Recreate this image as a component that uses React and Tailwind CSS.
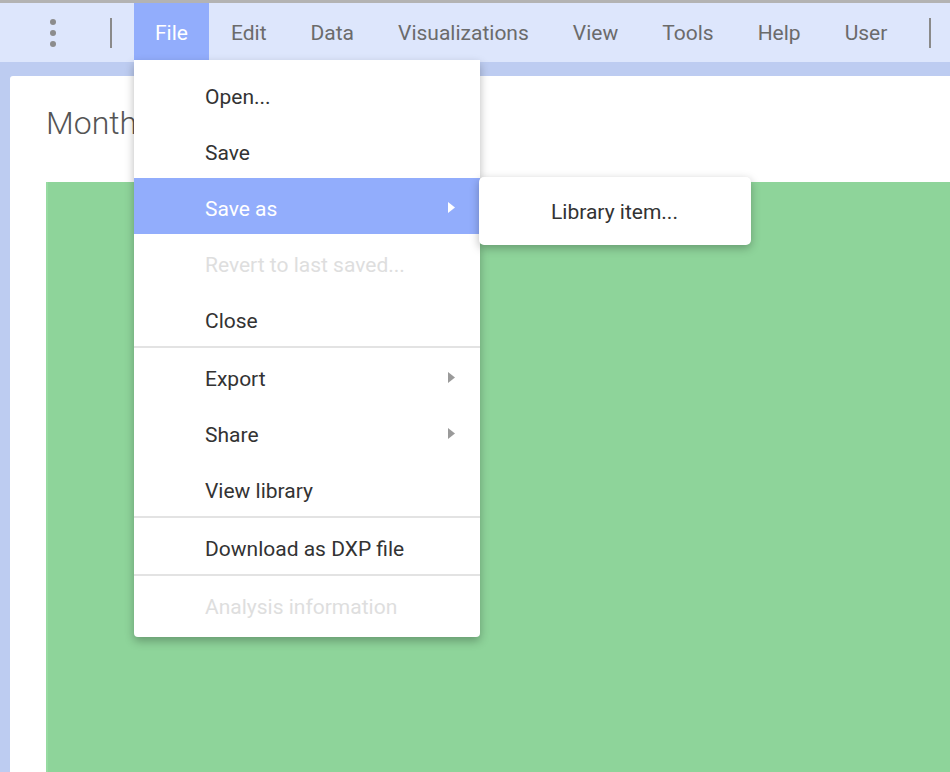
import { Fragment } from 'react'

const tabs = ['Edit', 'Data', 'Visualizations', 'View', 'Tools', 'Help', 'User']

const fileItems = [
  { label: 'Open...' },
  { label: 'Save' },
  { label: 'Save as', sub: true, active: true },
  { label: 'Revert to last saved...', disabled: true },
  { label: 'Close', divider: true },
  { label: 'Export', sub: true },
  { label: 'Share', sub: true },
  { label: 'View library', divider: true },
  { label: 'Download as DXP file', divider: true },
  { label: 'Analysis information', disabled: true },
]

const Caret = ({ white }) => (
  <svg width="7" height="11" viewBox="0 0 7 11" className="shrink-0 -mt-[6px]">
    <path d="M0 0 L7 5.5 L0 11 Z" fill={white ? '#ffffff' : '#9a9a9a'} />
  </svg>
)

const App = () => {
  return (
    <div className="relative w-[950px] h-[772px] overflow-hidden bg-[#bdccf1] font-['Roboto',sans-serif]">
      {/* Top bar */}
      <div className="h-[3px] bg-[#b3b3b3]" />
      <div className="flex h-[59px] items-stretch bg-[#dde6fc]">
        <div className="flex w-[110px] items-center justify-center pr-[4px]">
          <div className="flex flex-col gap-[5px]">
            <span className="block h-[6px] w-[6px] rounded-full bg-[#8c8c8c]" />
            <span className="block h-[6px] w-[6px] rounded-full bg-[#8c8c8c]" />
            <span className="block h-[6px] w-[6px] rounded-full bg-[#8c8c8c]" />
          </div>
        </div>
        <div className="flex items-center">
          <span className="block h-[30px] w-[2px] bg-[#8a8a8a]" />
        </div>
        <div className="ml-[22px] flex items-center bg-[#92adfc] px-[21px] pt-[2px] text-[21px] text-white">
          File
        </div>
        {tabs.map((t) => (
          <div key={t} className="flex items-center px-[22px] pt-[2px] text-[21px] text-[#6b6b6b]">
            {t}
          </div>
        ))}
        <div className="ml-[20px] flex items-center">
          <span className="block h-[30px] w-[2px] bg-[#8a8a8a]" />
        </div>
      </div>

      {/* Page */}
      <div className="pl-[10px] pt-[14px]">
        <div className="h-[700px] rounded-tl-[3px] bg-white pl-[36px]">
          <div className="w-[88px] overflow-hidden whitespace-nowrap pt-[27px] text-[32px] font-light leading-[40px] text-[#555555]">
            Monthly overview
          </div>
          <div className="mt-[39px] h-[600px] border-l-2 border-[#97dba2] bg-[#8ed49a]" />
        </div>
      </div>

      {/* File menu */}
      <div className="absolute left-[134px] top-[60px] w-[346px] rounded-b-[4px] bg-white pb-[5px] pt-[6px] shadow-[0_4px_10px_rgba(0,0,0,0.28)]">
        {fileItems.map((it) => (
          <Fragment key={it.label}>
            <div
              className={
                'flex h-[56px] items-center justify-between pl-[71px] pr-[25px] pt-[8px] text-[21px] ' +
                (it.active ? 'bg-[#92adfc] text-white' : it.disabled ? 'text-[#dedede]' : 'text-[#333333]')
              }
            >
              <span>{it.label}</span>
              {it.sub && <Caret white={it.active} />}
            </div>
            {it.divider && <div className="h-[2px] bg-[#e3e3e3]" />}
          </Fragment>
        ))}
      </div>

      {/* Save as submenu */}
      <div className="absolute left-[479px] top-[177px] flex h-[68px] w-[272px] items-center rounded-[5px] bg-white pl-[72px] pt-[4px] text-[21px] text-[#333333] shadow-[0_3px_10px_rgba(0,0,0,0.28)]">
        Library item...
      </div>
    </div>
  )
}

export default App
